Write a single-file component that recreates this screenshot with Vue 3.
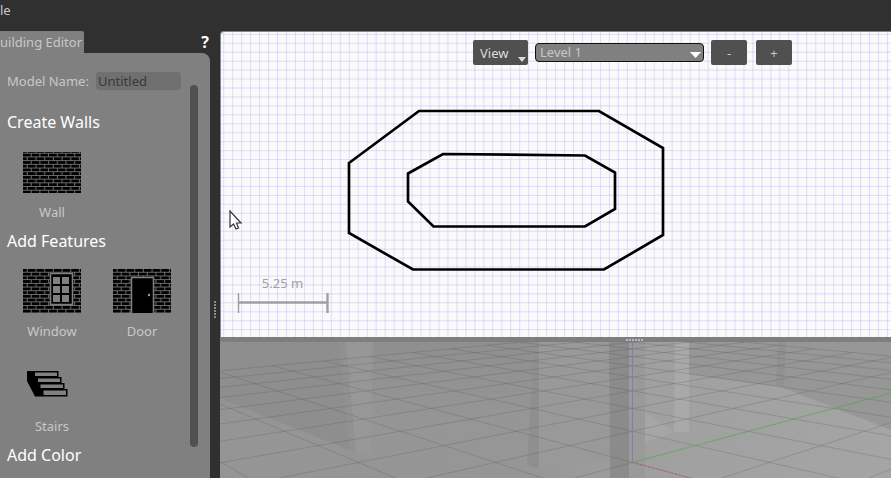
<script setup>
import { ref } from 'vue'

const modelName = ref('Untitled')
const level = ref('Level 1')

const range = (from, to) => Array.from({ length: to - from + 1 }, (_, i) => from + i)

// 2D plan grid
const columns = range(0, 220).map((i) => 3.7 + i * 8.97)
const rows = range(0, 120).map((i) => 3.3 + i * 8.95)

// Perspective projection of ground coordinates
const project = (a, b) => {
  const scale = 1 / (0.0073 + 0.00066 * (a + b))
  return [412.5 + (scale * (a - b)) / 2, -83 + 1.485 * scale]
}
const segment = (a1, b1, a2, b2) => {
  const [x1, y1] = project(a1, b1)
  const [x2, y2] = project(a2, b2)
  return { x1, y1, x2, y2 }
}
const ground = range(-10, 10).flatMap((n) => {
  const start = Math.max(-10, -4 - n)
  return [segment(n, start, n, 10), segment(start, n, 10, n)]
})
const greenAxis = segment(0, 0, 10, 0)
const redAxis = segment(0, 0, 0, -3)
</script>

<template>
  <div class="app">
    <header class="menubar"><button class="menu" type="button">le</button></header>

    <aside class="sidebar">
      <div class="tabs">
        <button class="tab" type="button">uilding Editor</button>
        <button class="help" type="button">?</button>
      </div>
      <div class="panel">
        <div class="content">
          <div class="field">
            <label for="model-name">Model Name:</label>
            <input id="model-name" v-model="modelName" type="text" />
          </div>

          <h2>Create Walls</h2>
          <div class="items">
            <button class="item" type="button">
              <svg width="58" height="44" viewBox="0 0 58 44">
                <defs>
                  <pattern id="bricks" width="8.7" height="7.4" patternUnits="userSpaceOnUse">
                    <rect width="8.7" height="7.4" fill="#000" />
                    <path d="M0 3.2H8.7M0 6.9H8.7M4.2 0V3.2M8.2 3.7V7.4" stroke="#707070" stroke-width="1" />
                  </pattern>
                </defs>
                <rect y="2" width="58" height="41" fill="url(#bricks)" />
              </svg>
              <span>Wall</span>
            </button>
          </div>

          <h2>Add Features</h2>
          <div class="items">
            <button class="item" type="button">
              <svg width="58" height="44" viewBox="0 0 58 44">
                <rect width="58" height="44" fill="url(#bricks)" />
                <rect x="27.5" y="4.5" width="22" height="31" fill="#000" stroke="#808080" stroke-width="1.5" />
                <path
                  d="M30 8h7v7h-7zM39 8h7v7h-7zM30 17h7v7h-7zM39 17h7v7h-7zM30 26h7v7h-7zM39 26h7v7h-7z"
                  fill="#808080"
                />
              </svg>
              <span>Window</span>
            </button>
            <button class="item" type="button">
              <svg width="58" height="44" viewBox="0 0 58 44">
                <rect width="58" height="44" fill="url(#bricks)" />
                <path d="M18.500 44V8.500H40.500V44" fill="#000" stroke="#808080" stroke-width="1.5" />
                <circle cx="36" cy="26" r="1.200" fill="#999" />
              </svg>
              <span>Door</span>
            </button>
            <button class="item" type="button">
              <svg width="58" height="44" viewBox="0 0 58 44">
                <path d="M4 7H35.500V13H38.500V19H41.500V25H44.500V32.500H12L4 17Z" fill="#000" />
                <path d="M12 8.500H34V12H12ZM15 14.500H37V18H15ZM17.500 20.500H40V24H17.500ZM20.500 26.500H43V31H20.500Z" fill="#808080" />
              </svg>
              <span>Stairs</span>
            </button>
          </div>

          <h2>Add Color</h2>
        </div>
        <div class="scrollbar"></div>
      </div>
    </aside>

    <div class="splitter vertical"><i v-for="n in 6" :key="n"></i></div>

    <main class="workspace">
      <section class="plan">
        <svg class="canvas">
          <g stroke="#8080ff" stroke-opacity=".24">
            <line v-for="x in columns" :key="'c' + x" :x1="x" y1="0" :x2="x" y2="100%" />
            <line v-for="y in rows" :key="'r' + y" x1="0" :y1="y" x2="100%" :y2="y" />
          </g>
          <g fill="none" stroke="#000" stroke-width="2.7">
            <path d="M129 132L199 80H379L443 117V204L384 238.500H193L129 202Z" />
            <path d="M188 142.500L223 123L365 124.500L395 141.500V178L365 195.500H213.500L188 170.500Z" />
          </g>
          <g stroke="#a0a0a4">
            <path d="M18.500 262V282" stroke-width="1.500" />
            <path d="M18.500 271.500H107.500M107.500 262V282" stroke-width="2.400" />
          </g>
          <text x="62.500" y="257" text-anchor="middle">5.25 m</text>
          <path
            d="M10 180V196L13.500 193L16 198L18.500 197L16.500 192H21Z"
            fill="#fff"
            stroke="#333"
            stroke-width="1.200"
          />
        </svg>
        <div class="toolbar">
          <button class="view" type="button">
            View
            <svg width="8" height="5"><path d="M0 0H8L4 5Z" fill="#d8d8d8" /></svg>
          </button>
          <div class="level">
            <select v-model="level" aria-label="Level">
              <option>Level 1</option>
            </select>
            <svg width="11" height="6"><path d="M0 0H11L5.500 6Z" fill="#fff" /></svg>
          </div>
          <div class="steps">
            <button type="button">-</button>
            <button type="button">+</button>
          </div>
        </div>
      </section>

      <div class="splitter horizontal"><i v-for="n in 6" :key="n"></i></div>

      <section class="scene">
        <svg class="canvas">
          <defs>
            <linearGradient id="floor" gradientUnits="userSpaceOnUse" x1="0" y1="0" x2="671" y2="0">
              <stop offset="0" stop-color="#959595" />
              <stop offset=".45" stop-color="#969696" />
              <stop offset=".65" stop-color="#a0a0a0" />
              <stop offset="1" stop-color="#a5a5a5" />
            </linearGradient>
            <linearGradient id="haze" x1="0" y1="0" x2="0" y2="1">
              <stop offset="0" stop-color="#808080" stop-opacity=".3" />
              <stop offset=".6" stop-color="#808080" stop-opacity="0" />
            </linearGradient>
          </defs>
          <rect width="100%" height="100%" fill="url(#floor)" />
          <path d="M0 0H390V136H0Z" fill="url(#haze)" />
          <path d="M0 0H119L136 111L0 56Z" fill="#8e8e8e" />
          <path d="M119 0H126L136 111L129 108Z" fill="#919191" />
          <path d="M126 0H153L151 111H136Z" fill="#989898" fill-opacity=".8" />
          <path d="M314 0H319V127L307 123Z" fill="#8f8f8f" />
          <path d="M319 0H389V118L319 127Z" fill="#999" />
          <path d="M389 0H409V136H390Z" fill="#8b8b8b" />
          <path d="M409 0H425V136H409Z" fill="#9a9a9a" />
          <path d="M425 0H455V90L425 70Z" fill="#a0a0a0" />
          <path d="M425 70L455 90L425 100Z" fill="#a6a6a6" />
          <path d="M469 0H671V88L561 45L490 35L469 32Z" fill="#979797" />
          <path d="M671 0H2000V136H671Z" fill="#979797" />
          <path d="M455 0H469V90H454Z" fill="#a9a9a9" />
          <path d="M558 0H566L564 45L556 43Z" fill="#919191" />
          <g stroke="#555" stroke-opacity=".25">
            <line v-for="(l, i) in ground" :key="i" v-bind="l" />
          </g>
          <line v-bind="greenAxis" stroke="#45c845" stroke-dasharray="3 1" stroke-opacity=".6" />
          <line v-bind="redAxis" stroke="#d84848" stroke-dasharray="2 2" stroke-opacity=".8" />
          <path d="M412.500 0V121" stroke="#8080ac" />
        </svg>
      </section>
    </main>
  </div>
</template>

<style>
body {
  margin: 0;
}
</style>

<style scoped>
.app {
  display: grid;
  grid-template: 31px minmax(0, 1fr) / 210px 10px minmax(0, 1fr);
  height: 100vh;
  overflow: hidden;
  background: #303030;
  color: #c8c8c8;
  font: 13px/18px "Noto Sans", "Open Sans", sans-serif;
}
button,
input,
select {
  margin: 0;
  padding: 0;
  border: 0;
  background: none;
  color: inherit;
  font: inherit;
}
.menubar {
  grid-column: 1 / -1;
}
.menu {
  height: 20px;
}
.sidebar {
  display: flex;
  flex-direction: column;
  min-height: 0;
}
.tabs {
  display: flex;
  justify-content: space-between;
  height: 22px;
}
.tab {
  width: 84px;
  padding-right: 4px;
  text-align: right;
  white-space: nowrap;
  background: #808080;
  border-radius: 0 2px 0 0;
}
.help {
  width: 10px;
  color: #fff;
  font-size: 16px;
  font-weight: 700;
}
.panel {
  flex: 1;
  display: flex;
  min-height: 0;
  background: #808080;
  border-radius: 0 8px 0 0;
}
.content {
  flex: 1;
  min-width: 0;
  overflow: hidden;
  padding: 19px 0 0 7px;
}
.field {
  display: flex;
  justify-content: space-between;
  padding-right: 9px;
  margin-bottom: 20px;
}
.field input {
  width: 85px;
  box-sizing: border-box;
  padding-left: 2px;
  border-radius: 3px;
  background: #707070;
  color: #383838;
}
h2 {
  margin: 0;
  color: #fff;
  font-size: 16px;
  font-weight: 400;
  line-height: 24px;
}
.items {
  display: grid;
  grid-template-columns: 90px 90px;
  row-gap: 24px;
  padding: 16px 0 8px;
}
.item {
  display: flex;
  flex-direction: column;
  align-items: center;
  gap: 9px;
}
.scrollbar {
  width: 8px;
  margin: 32px 12px 31px 0;
  border-radius: 4px;
  background: #505050;
}
.splitter {
  display: flex;
  align-items: center;
  justify-content: center;
  gap: 1px;
}
.splitter i {
  background: #8c8c8c;
}
.vertical {
  flex-direction: column;
  padding-top: 110px;
}
.vertical i {
  width: 2px;
  height: 2px;
}
.horizontal {
  padding-left: 158px;
  background: #7e7e7e;
}
.horizontal i {
  width: 2px;
  height: 2px;
  background: #b8b8b8;
}
.workspace {
  display: grid;
  grid-template-rows: minmax(0, 9fr) 5px minmax(0, 4fr);
}
.plan {
  display: grid;
  min-height: 0;
  box-sizing: border-box;
  background: #fafafa;
  border: solid #858585;
  border-width: 1px 0 0 1px;
  border-radius: 4px 0 0 0;
  overflow: hidden;
}
.canvas {
  grid-area: 1 / 1;
  display: block;
  width: 100%;
  height: 100%;
}
.plan .canvas {
  width: calc(100% + 1px);
  height: calc(100% + 1px);
  margin: -1px 0 0 -1px;
}
.canvas text {
  fill: #a0a0a4;
  font-size: 13px;
}
.toolbar {
  grid-area: 1 / 1;
  align-self: start;
  display: flex;
  align-items: center;
  gap: 7px;
  padding: 8px 0 0 252px;
}
.toolbar button {
  height: 25px;
  border-radius: 2px;
  background: #505050;
}
.toolbar .view {
  display: flex;
  align-items: center;
  justify-content: space-between;
  width: 55px;
  padding: 0 2px 0 7px;
  color: #ddd;
}
.view svg {
  align-self: flex-end;
  margin-bottom: 3px;
}
.level {
  display: grid;
  align-items: center;
  width: 169px;
}
.level select {
  grid-area: 1 / 1;
  height: 19px;
  padding-left: 4px;
  appearance: none;
  border: 1px solid #111;
  border-radius: 4px;
  background: #808080;
  line-height: 17px;
}
.level svg {
  grid-area: 1 / 1;
  justify-self: end;
  margin: 4px 3px 0 0;
  pointer-events: none;
}
.steps {
  display: flex;
  gap: 9px;
}
.steps button {
  width: 36px;
}
.scene {
  min-height: 0;
  overflow: hidden;
}
</style>
